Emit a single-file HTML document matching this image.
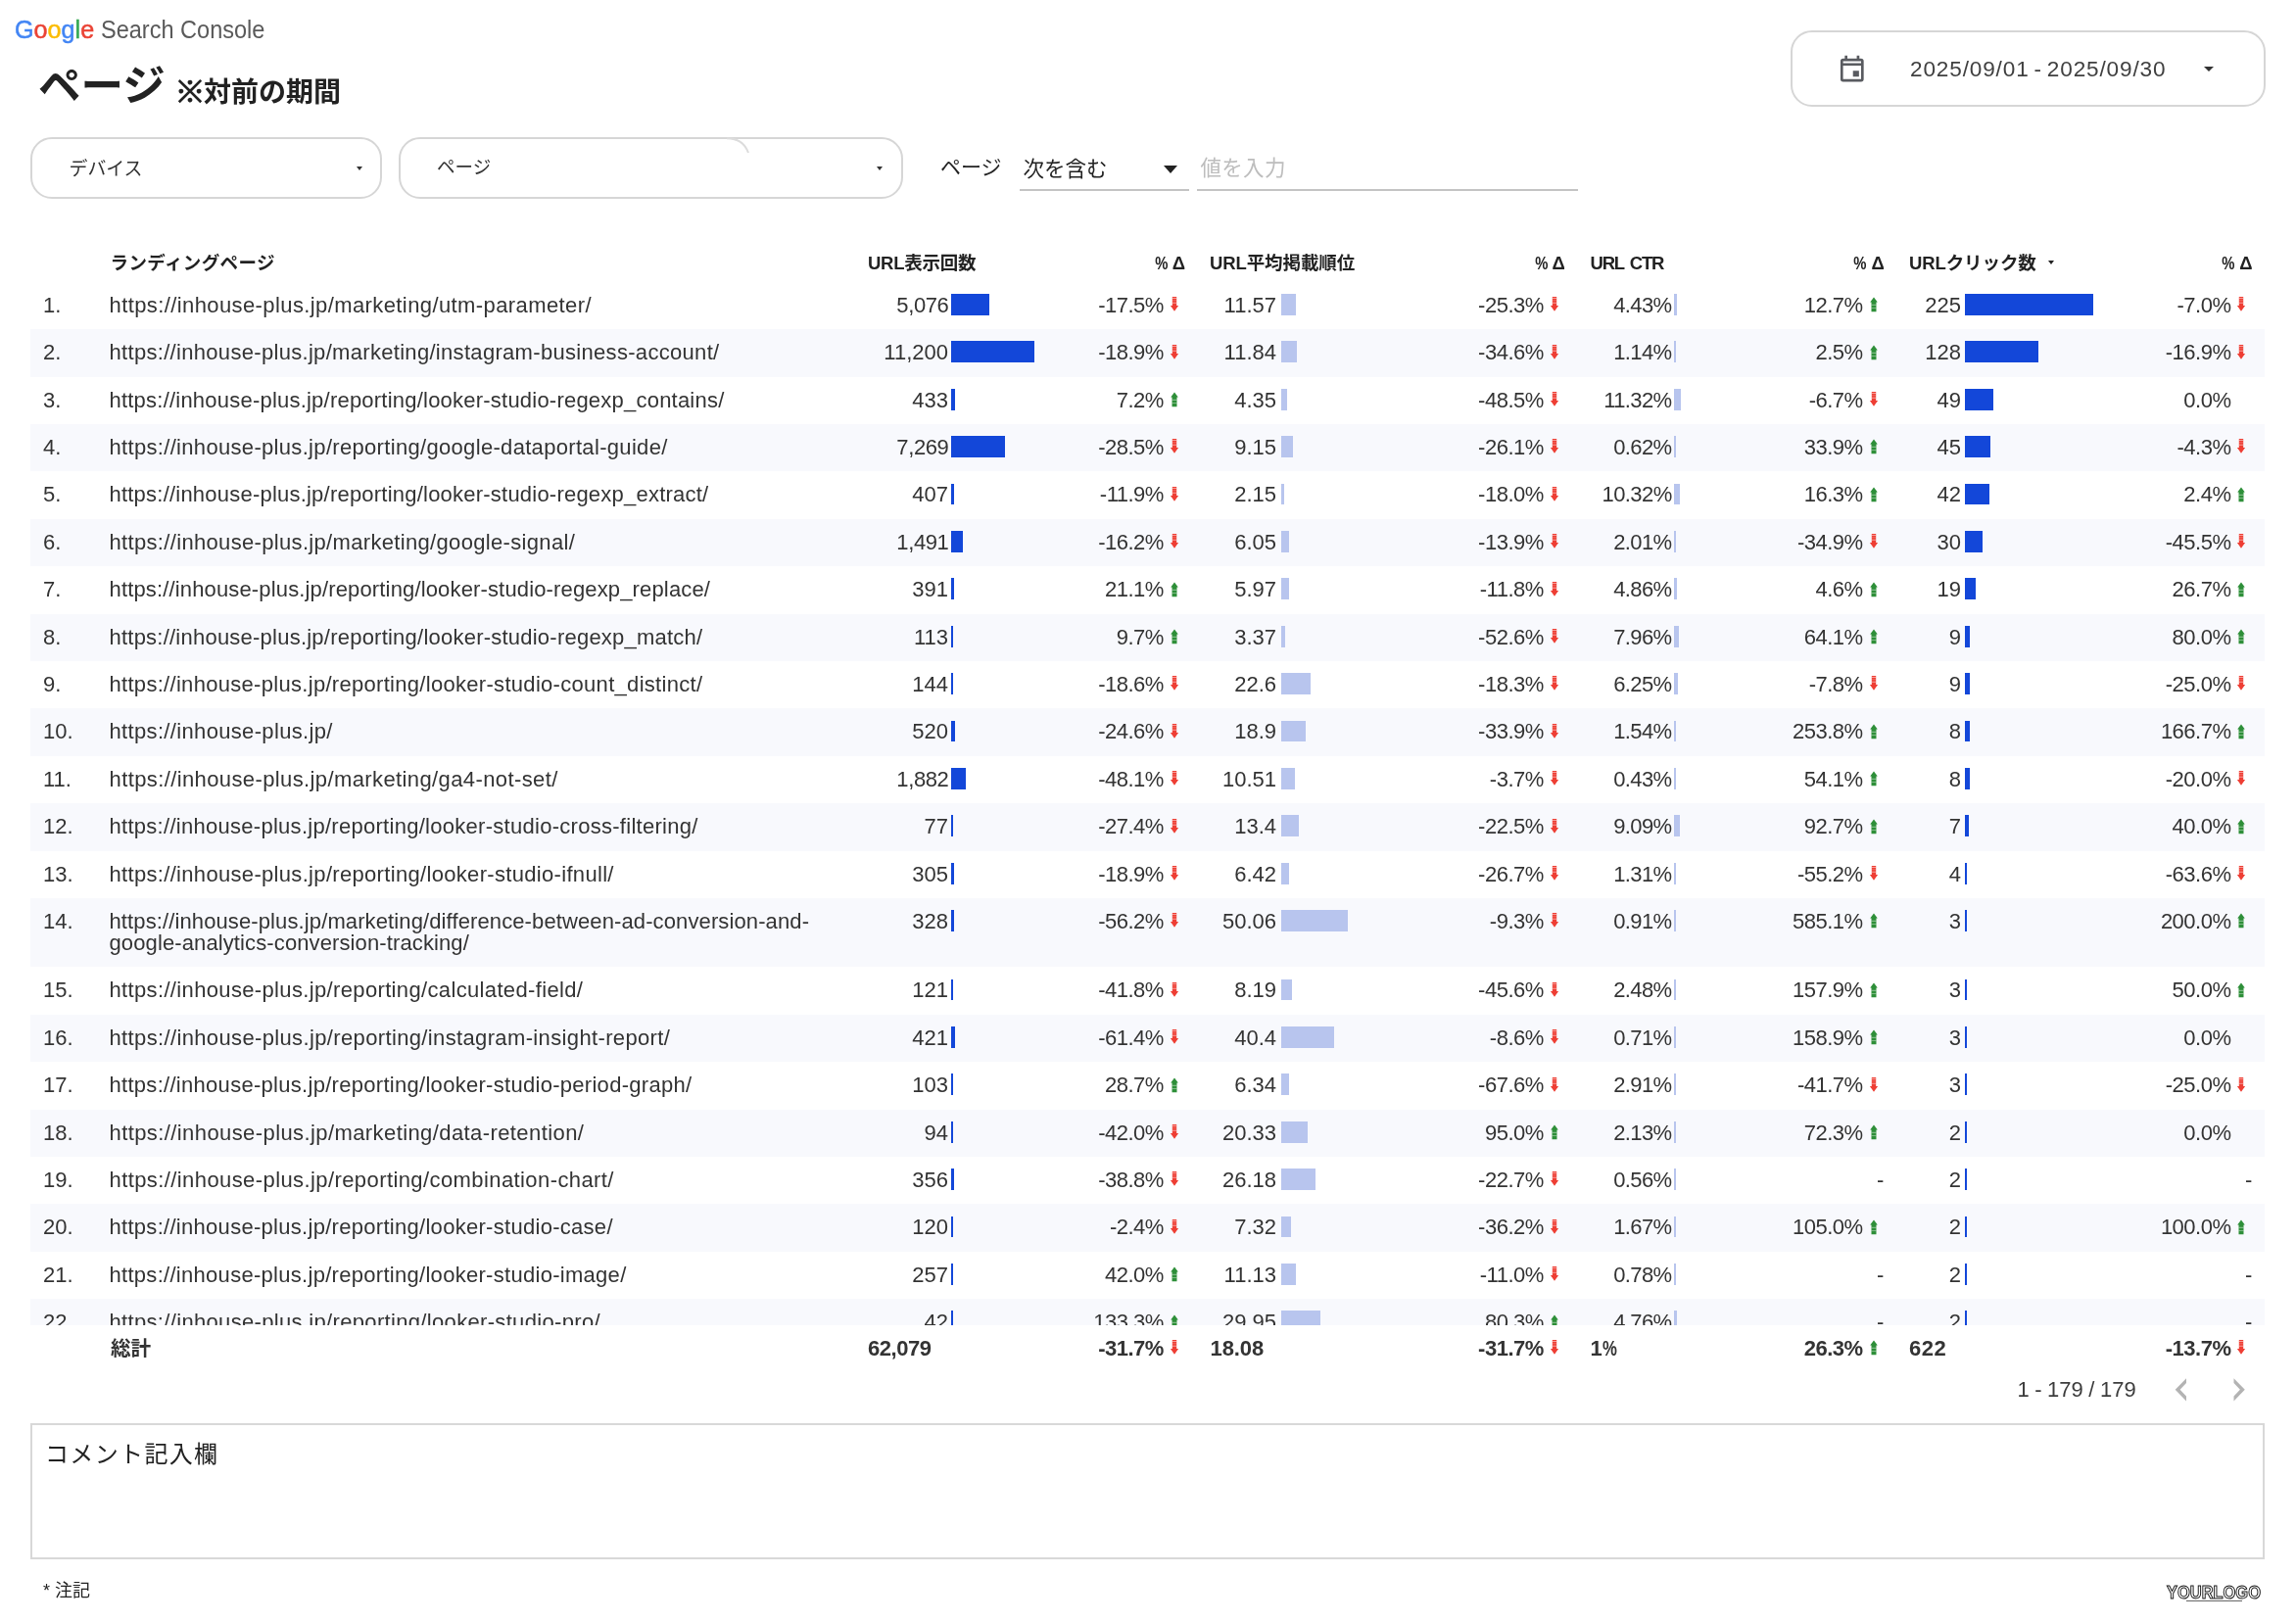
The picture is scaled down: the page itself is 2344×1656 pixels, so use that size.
<!DOCTYPE html>
<html lang="ja"><head><meta charset="utf-8"><title>Google Search Console - ページ</title>
<style>
html,body{margin:0;padding:0;background:#fff}
body{width:2344px;height:1656px;position:relative;font-family:"Liberation Sans","Noto Sans CJK JP",sans-serif;color:#333}
.abs{position:absolute;white-space:nowrap}
.logo{left:15px;top:15.3px;font-size:26px;line-height:30px}
.logo .g{display:inline-block;transform:scaleX(.968);transform-origin:0 50%;-webkit-text-stroke:.5px currentColor}
.logo .sc{display:inline-block;transform:scaleX(.905);transform-origin:0 50%;color:#5a5a5a;margin-left:4.5px}
.title{left:39px;top:57.5px;font-weight:bold;font-size:43.5px;line-height:60px;color:#222}
.sub{left:180px;top:75.2px;font-weight:bold;font-size:28px;line-height:40px;color:#222}
.box{position:absolute;border:2px solid #d6d6d6;border-radius:22px;box-sizing:border-box;background:#fff}
.tri{position:absolute;width:0;height:0;border-style:solid;border-color:#333 transparent transparent transparent}
.ul{position:absolute;height:2px;background:#c4c4c4}
#tbl{position:absolute;left:0;top:287.8px;width:2344px;height:1065.8px;overflow:hidden}
#pg{position:absolute;left:0;top:0;width:2344px;height:1656px;overflow:hidden;will-change:transform}
.row{position:absolute;left:0;width:2344px;height:48.4px;font-size:22px;line-height:48.4px}
.row .bg{position:absolute;left:31.3px;width:2280.5px;top:0;bottom:0;background:#f8f9fd}
.row span{position:absolute;top:0;white-space:nowrap}
.row .n{left:44px}
.row .u{left:111.5px;letter-spacing:.36px}
.row .r{text-align:right}
.row .p{letter-spacing:-.5px;margin-right:-.5px}
.row .c{letter-spacing:-.6px;margin-right:-.6px}
.bar{position:absolute;top:12.2px;height:21.8px}
.ar{position:absolute}
.hd{position:absolute;font-weight:bold;font-size:18.5px;line-height:28px;top:255px;color:#222;white-space:nowrap}
.tot{font-weight:bold;color:#333}
.pc{display:inline-block;transform:scaleX(.8);transform-origin:100% 50%;margin-left:-3px}
.nj{font-family:"Liberation Sans","IPAGothic",sans-serif}
.row.two .u{line-height:22.4px;top:12.8px;white-space:normal}
</style></head><body><div id="pg">
<div class="abs logo"><span class="g"><span style="color:#4285f4">G</span><span style="color:#ea4335">o</span><span style="color:#fbbc05">o</span><span style="color:#4285f4">g</span><span style="color:#34a853">l</span><span style="color:#ea4335">e</span></span><span class="sc">Search Console</span></div>
<div class="abs title">ページ</div><div class="abs sub"><span class="nj">※</span>対前の期間</div>
<div class="box" style="left:1828px;top:31px;width:484.6px;height:78.4px"></div>
<svg class="abs" style="left:1877px;top:56px" width="27.600" height="29" viewBox="0 0 27 29" preserveAspectRatio="none"><path fill="#595b60" d="M6.2 0.8h2.6v3h9.4v-3h2.6v3h1.7a2.6 2.6 0 0 1 2.6 2.6v18.4a2.6 2.6 0 0 1-2.6 2.6H4.5a2.6 2.6 0 0 1-2.6-2.6V6.400a2.6 2.6 0 0 1 2.600-2.600h1.7zM4.500 11v13.8h18V11zM4.500 6.400v2h18v-2zM14.400 16.200h6v6h-6z" fill-rule="evenodd"/></svg>
<div class="abs" style="left:1950px;top:57px;font-size:22.6px;line-height:28px;letter-spacing:.85px;word-spacing:-2.2px;color:#404040">2025/09/01 - 2025/09/30</div>
<div class="tri" style="left:2250px;top:68px;border-width:5px 5px 0 5px"></div>
<div class="box" style="left:31.2px;top:140.2px;width:358.6px;height:63px"></div>
<div class="abs" style="left:70.5px;top:158.5px;font-size:18.9px;line-height:28px;color:#333">デバイス</div>
<div class="tri" style="left:364px;top:170px;border-width:4px 3.700px 0 3.700px"></div>
<div class="box" style="left:406.6px;top:140.2px;width:515px;height:63px"></div>
<svg class="abs" style="left:700px;top:140px" width="70" height="20" viewBox="0 0 70 20"><path d="M42 1.3C54 1.300 60.500 6.500 64 16" fill="none" stroke="#dcdcdc" stroke-width="2"/></svg>
<div class="abs" style="left:446px;top:157px;font-size:18.5px;line-height:28px;color:#333">ページ</div>
<div class="tri" style="left:894.6px;top:170px;border-width:4.2px 3.9px 0 3.9px"></div>
<div class="abs" style="left:960px;top:155px;font-size:21px;line-height:32px;color:#222">ページ</div>
<div class="abs" style="left:1044.5px;top:157px;font-size:21.5px;line-height:32px;color:#222">次を含む</div>
<div class="tri" style="left:1188px;top:169px;border-width:8px 7px 0 7px;border-top-color:#222"></div>
<div class="ul" style="left:1040.500px;top:193px;width:173.500px"></div>
<div class="ul" style="left:1221.500px;top:193px;width:389.500px"></div>
<div class="abs" style="left:1225.500px;top:156px;font-size:21.500px;line-height:32px;color:#bdbdbd;letter-spacing:.3px">値を入力</div>
<div class="hd" style="left:112.5px;letter-spacing:.4px">ランディングページ</div>
<div class="hd" style="left:886px;letter-spacing:-0.25px;word-spacing:0px">URL表示回数</div>
<div class="hd" style="left:1235px;letter-spacing:-0.1px;word-spacing:0px">URL平均掲載順位</div>
<div class="hd" style="left:1623.5px;letter-spacing:-1.2px;word-spacing:2.2px">URL CTR</div>
<div class="hd" style="left:1949px;letter-spacing:-0.1px;word-spacing:0px">URLクリック数</div>
<div class="hd" style="right:1134.0px"><span class="pc">%</span> Δ</div>
<div class="hd" style="right:746.1px"><span class="pc">%</span> Δ</div>
<div class="hd" style="right:420.3px"><span class="pc">%</span> Δ</div>
<div class="hd" style="right:44.4px"><span class="pc">%</span> Δ</div>
<div class="tri" style="left:2090.500px;top:266px;border-width:4.500px 3.700px 0 3.700px;border-top-color:#222"></div>
<div id="tbl">
<div class="row" style="top:0.0px;height:48.4px"><span class="n">1.</span><span class="u" style="letter-spacing:0.4px">https://inhouse-plus.jp/marketing/utm-parameter/</span><span class="r" style="right:1376.0px;letter-spacing:-.4px;margin-right:-.4px">5,076</span><div class="bar" style="left:971.4px;width:38.2px;background:#1347d9"></div><span class="r p" style="right:1156.6px">-17.5%</span><svg class="ar" style="left:1193.8px;top:15.5px" width="10" height="16" viewBox="0 0 10 16"><path fill="#ee3e34" d="M2.8 0h4.400v9h1.900L5 14.800L.900 9h1.900z"/><path fill="#fff" fill-opacity=".5" d="M2.800 .900h4.400v1h-4.400zM2.800 5.700h4.400v1h-4.400z"/><path fill="#fff" fill-opacity=".25" d="M2.800 3.300h4.400v.900h-4.400z"/></svg><span class="r" style="right:1041.0px">11.57</span><div class="bar" style="left:1307.7px;width:15.7px;background:#b8c5ee"></div><span class="r p" style="right:768.7px">-25.3%</span><svg class="ar" style="left:1581.7px;top:15.5px" width="10" height="16" viewBox="0 0 10 16"><path fill="#ee3e34" d="M2.8 0h4.400v9h1.900L5 14.800L.900 9h1.900z"/><path fill="#fff" fill-opacity=".5" d="M2.800 .900h4.400v1h-4.400zM2.800 5.700h4.400v1h-4.400z"/><path fill="#fff" fill-opacity=".25" d="M2.800 3.300h4.400v.900h-4.400z"/></svg><span class="r c" style="right:638.0px">4.43%</span><div class="bar" style="left:1709.1px;width:2.7px;background:#b8c5ee"></div><span class="r p" style="right:442.9px">12.7%</span><svg class="ar" style="left:1907.5px;top:15.5px" width="10" height="16" viewBox="0 0 10 16"><path fill="#2e8f39" d="M5 .600L8.800 5.500H7.500v9.800h-5V5.500H1.200z"/><path fill="#fff" fill-opacity=".38" d="M2.500 7.800h5v1.100h-5zM2.500 11h5v1.100h-5z"/></svg><span class="r" style="right:342.1px">225</span><div class="bar" style="left:2006.2px;width:131.3px;background:#1347d9"></div><span class="r p" style="right:67.0px">-7.0%</span><svg class="ar" style="left:2283.4px;top:15.5px" width="10" height="16" viewBox="0 0 10 16"><path fill="#ee3e34" d="M2.8 0h4.400v9h1.900L5 14.800L.900 9h1.900z"/><path fill="#fff" fill-opacity=".5" d="M2.800 .900h4.400v1h-4.400zM2.800 5.700h4.400v1h-4.400z"/><path fill="#fff" fill-opacity=".25" d="M2.800 3.300h4.400v.900h-4.400z"/></svg></div>
<div class="row" style="top:48.4px;height:48.4px"><div class="bg"></div><span class="n">2.</span><span class="u" style="letter-spacing:0.31px">https://inhouse-plus.jp/marketing/instagram-business-account/</span><span class="r" style="right:1376.0px">11,200</span><div class="bar" style="left:971.4px;width:84.3px;background:#1347d9"></div><span class="r p" style="right:1156.6px">-18.9%</span><svg class="ar" style="left:1193.8px;top:15.5px" width="10" height="16" viewBox="0 0 10 16"><path fill="#ee3e34" d="M2.8 0h4.400v9h1.900L5 14.800L.900 9h1.900z"/><path fill="#fff" fill-opacity=".5" d="M2.800 .900h4.400v1h-4.400zM2.800 5.700h4.400v1h-4.400z"/><path fill="#fff" fill-opacity=".25" d="M2.800 3.300h4.400v.900h-4.400z"/></svg><span class="r" style="right:1041.0px">11.84</span><div class="bar" style="left:1307.7px;width:16.1px;background:#b8c5ee"></div><span class="r p" style="right:768.7px">-34.6%</span><svg class="ar" style="left:1581.7px;top:15.5px" width="10" height="16" viewBox="0 0 10 16"><path fill="#ee3e34" d="M2.8 0h4.400v9h1.900L5 14.800L.900 9h1.900z"/><path fill="#fff" fill-opacity=".5" d="M2.800 .900h4.400v1h-4.400zM2.800 5.700h4.400v1h-4.400z"/><path fill="#fff" fill-opacity=".25" d="M2.800 3.300h4.400v.900h-4.400z"/></svg><span class="r c" style="right:638.0px">1.14%</span><div class="bar" style="left:1709.1px;width:1.5px;background:#b8c5ee"></div><span class="r p" style="right:442.9px">2.5%</span><svg class="ar" style="left:1907.5px;top:15.5px" width="10" height="16" viewBox="0 0 10 16"><path fill="#2e8f39" d="M5 .600L8.800 5.500H7.500v9.800h-5V5.500H1.200z"/><path fill="#fff" fill-opacity=".38" d="M2.500 7.800h5v1.100h-5zM2.500 11h5v1.100h-5z"/></svg><span class="r" style="right:342.1px">128</span><div class="bar" style="left:2006.2px;width:74.7px;background:#1347d9"></div><span class="r p" style="right:67.0px">-16.9%</span><svg class="ar" style="left:2283.4px;top:15.5px" width="10" height="16" viewBox="0 0 10 16"><path fill="#ee3e34" d="M2.8 0h4.400v9h1.900L5 14.800L.900 9h1.900z"/><path fill="#fff" fill-opacity=".5" d="M2.800 .900h4.400v1h-4.400zM2.800 5.700h4.400v1h-4.400z"/><path fill="#fff" fill-opacity=".25" d="M2.800 3.300h4.400v.900h-4.400z"/></svg></div>
<div class="row" style="top:96.8px;height:48.4px"><span class="n">3.</span><span class="u" style="letter-spacing:0.22px">https://inhouse-plus.jp/reporting/looker-studio-regexp_contains/</span><span class="r" style="right:1376.0px">433</span><div class="bar" style="left:971.4px;width:3.3px;background:#1347d9"></div><span class="r p" style="right:1156.6px">7.2%</span><svg class="ar" style="left:1193.8px;top:15.5px" width="10" height="16" viewBox="0 0 10 16"><path fill="#2e8f39" d="M5 .600L8.800 5.500H7.500v9.800h-5V5.500H1.200z"/><path fill="#fff" fill-opacity=".38" d="M2.500 7.800h5v1.100h-5zM2.500 11h5v1.100h-5z"/></svg><span class="r" style="right:1041.0px">4.35</span><div class="bar" style="left:1307.7px;width:5.9px;background:#b8c5ee"></div><span class="r p" style="right:768.7px">-48.5%</span><svg class="ar" style="left:1581.7px;top:15.5px" width="10" height="16" viewBox="0 0 10 16"><path fill="#ee3e34" d="M2.8 0h4.400v9h1.900L5 14.800L.900 9h1.900z"/><path fill="#fff" fill-opacity=".5" d="M2.800 .900h4.400v1h-4.400zM2.800 5.700h4.400v1h-4.400z"/><path fill="#fff" fill-opacity=".25" d="M2.800 3.300h4.400v.900h-4.400z"/></svg><span class="r c" style="right:638.0px">11.32%</span><div class="bar" style="left:1709.1px;width:6.8px;background:#b8c5ee"></div><span class="r p" style="right:442.9px">-6.7%</span><svg class="ar" style="left:1907.5px;top:15.5px" width="10" height="16" viewBox="0 0 10 16"><path fill="#ee3e34" d="M2.8 0h4.400v9h1.900L5 14.800L.900 9h1.900z"/><path fill="#fff" fill-opacity=".5" d="M2.800 .900h4.400v1h-4.400zM2.800 5.700h4.400v1h-4.400z"/><path fill="#fff" fill-opacity=".25" d="M2.800 3.300h4.400v.900h-4.400z"/></svg><span class="r" style="right:342.1px">49</span><div class="bar" style="left:2006.2px;width:28.6px;background:#1347d9"></div><span class="r p" style="right:67.0px">0.0%</span></div>
<div class="row" style="top:145.2px;height:48.4px"><div class="bg"></div><span class="n">4.</span><span class="u" style="letter-spacing:0.32px">https://inhouse-plus.jp/reporting/google-dataportal-guide/</span><span class="r" style="right:1376.0px;letter-spacing:-.4px;margin-right:-.4px">7,269</span><div class="bar" style="left:971.4px;width:54.7px;background:#1347d9"></div><span class="r p" style="right:1156.6px">-28.5%</span><svg class="ar" style="left:1193.8px;top:15.5px" width="10" height="16" viewBox="0 0 10 16"><path fill="#ee3e34" d="M2.8 0h4.400v9h1.900L5 14.800L.900 9h1.900z"/><path fill="#fff" fill-opacity=".5" d="M2.800 .900h4.400v1h-4.400zM2.800 5.700h4.400v1h-4.400z"/><path fill="#fff" fill-opacity=".25" d="M2.800 3.300h4.400v.900h-4.400z"/></svg><span class="r" style="right:1041.0px">9.15</span><div class="bar" style="left:1307.7px;width:12.4px;background:#b8c5ee"></div><span class="r p" style="right:768.7px">-26.1%</span><svg class="ar" style="left:1581.7px;top:15.5px" width="10" height="16" viewBox="0 0 10 16"><path fill="#ee3e34" d="M2.8 0h4.400v9h1.900L5 14.800L.900 9h1.900z"/><path fill="#fff" fill-opacity=".5" d="M2.800 .900h4.400v1h-4.400zM2.800 5.700h4.400v1h-4.400z"/><path fill="#fff" fill-opacity=".25" d="M2.800 3.300h4.400v.900h-4.400z"/></svg><span class="r c" style="right:638.0px">0.62%</span><div class="bar" style="left:1709.1px;width:1.5px;background:#b8c5ee"></div><span class="r p" style="right:442.9px">33.9%</span><svg class="ar" style="left:1907.5px;top:15.5px" width="10" height="16" viewBox="0 0 10 16"><path fill="#2e8f39" d="M5 .600L8.800 5.500H7.500v9.800h-5V5.500H1.200z"/><path fill="#fff" fill-opacity=".38" d="M2.500 7.800h5v1.100h-5zM2.500 11h5v1.100h-5z"/></svg><span class="r" style="right:342.1px">45</span><div class="bar" style="left:2006.2px;width:26.3px;background:#1347d9"></div><span class="r p" style="right:67.0px">-4.3%</span><svg class="ar" style="left:2283.4px;top:15.5px" width="10" height="16" viewBox="0 0 10 16"><path fill="#ee3e34" d="M2.8 0h4.400v9h1.900L5 14.800L.900 9h1.900z"/><path fill="#fff" fill-opacity=".5" d="M2.800 .900h4.400v1h-4.400zM2.800 5.700h4.400v1h-4.400z"/><path fill="#fff" fill-opacity=".25" d="M2.800 3.300h4.400v.900h-4.400z"/></svg></div>
<div class="row" style="top:193.6px;height:48.4px"><span class="n">5.</span><span class="u" style="letter-spacing:0.22px">https://inhouse-plus.jp/reporting/looker-studio-regexp_extract/</span><span class="r" style="right:1376.0px">407</span><div class="bar" style="left:971.4px;width:3.1px;background:#1347d9"></div><span class="r p" style="right:1156.6px">-11.9%</span><svg class="ar" style="left:1193.8px;top:15.5px" width="10" height="16" viewBox="0 0 10 16"><path fill="#ee3e34" d="M2.8 0h4.400v9h1.900L5 14.800L.900 9h1.900z"/><path fill="#fff" fill-opacity=".5" d="M2.800 .900h4.400v1h-4.400zM2.800 5.700h4.400v1h-4.400z"/><path fill="#fff" fill-opacity=".25" d="M2.800 3.300h4.400v.900h-4.400z"/></svg><span class="r" style="right:1041.0px">2.15</span><div class="bar" style="left:1307.7px;width:2.9px;background:#b8c5ee"></div><span class="r p" style="right:768.7px">-18.0%</span><svg class="ar" style="left:1581.7px;top:15.5px" width="10" height="16" viewBox="0 0 10 16"><path fill="#ee3e34" d="M2.8 0h4.400v9h1.900L5 14.800L.900 9h1.900z"/><path fill="#fff" fill-opacity=".5" d="M2.800 .900h4.400v1h-4.400zM2.800 5.700h4.400v1h-4.400z"/><path fill="#fff" fill-opacity=".25" d="M2.800 3.300h4.400v.900h-4.400z"/></svg><span class="r c" style="right:638.0px">10.32%</span><div class="bar" style="left:1709.1px;width:6.2px;background:#b8c5ee"></div><span class="r p" style="right:442.9px">16.3%</span><svg class="ar" style="left:1907.5px;top:15.5px" width="10" height="16" viewBox="0 0 10 16"><path fill="#2e8f39" d="M5 .600L8.800 5.500H7.500v9.800h-5V5.500H1.200z"/><path fill="#fff" fill-opacity=".38" d="M2.500 7.800h5v1.100h-5zM2.500 11h5v1.100h-5z"/></svg><span class="r" style="right:342.1px">42</span><div class="bar" style="left:2006.2px;width:24.5px;background:#1347d9"></div><span class="r p" style="right:67.0px">2.4%</span><svg class="ar" style="left:2283.4px;top:15.5px" width="10" height="16" viewBox="0 0 10 16"><path fill="#2e8f39" d="M5 .600L8.800 5.500H7.500v9.800h-5V5.500H1.200z"/><path fill="#fff" fill-opacity=".38" d="M2.500 7.800h5v1.100h-5zM2.500 11h5v1.100h-5z"/></svg></div>
<div class="row" style="top:242.0px;height:48.4px"><div class="bg"></div><span class="n">6.</span><span class="u" style="letter-spacing:0.33px">https://inhouse-plus.jp/marketing/google-signal/</span><span class="r" style="right:1376.0px;letter-spacing:-.4px;margin-right:-.4px">1,491</span><div class="bar" style="left:971.4px;width:11.2px;background:#1347d9"></div><span class="r p" style="right:1156.6px">-16.2%</span><svg class="ar" style="left:1193.8px;top:15.5px" width="10" height="16" viewBox="0 0 10 16"><path fill="#ee3e34" d="M2.8 0h4.400v9h1.900L5 14.800L.900 9h1.900z"/><path fill="#fff" fill-opacity=".5" d="M2.800 .900h4.400v1h-4.400zM2.800 5.700h4.400v1h-4.400z"/><path fill="#fff" fill-opacity=".25" d="M2.800 3.300h4.400v.900h-4.400z"/></svg><span class="r" style="right:1041.0px">6.05</span><div class="bar" style="left:1307.7px;width:8.2px;background:#b8c5ee"></div><span class="r p" style="right:768.7px">-13.9%</span><svg class="ar" style="left:1581.7px;top:15.5px" width="10" height="16" viewBox="0 0 10 16"><path fill="#ee3e34" d="M2.8 0h4.400v9h1.900L5 14.800L.900 9h1.900z"/><path fill="#fff" fill-opacity=".5" d="M2.800 .900h4.400v1h-4.400zM2.800 5.700h4.400v1h-4.400z"/><path fill="#fff" fill-opacity=".25" d="M2.800 3.300h4.400v.900h-4.400z"/></svg><span class="r c" style="right:638.0px">2.01%</span><div class="bar" style="left:1709.1px;width:1.5px;background:#b8c5ee"></div><span class="r p" style="right:442.9px">-34.9%</span><svg class="ar" style="left:1907.5px;top:15.5px" width="10" height="16" viewBox="0 0 10 16"><path fill="#ee3e34" d="M2.8 0h4.400v9h1.900L5 14.800L.900 9h1.900z"/><path fill="#fff" fill-opacity=".5" d="M2.800 .900h4.400v1h-4.400zM2.800 5.700h4.400v1h-4.400z"/><path fill="#fff" fill-opacity=".25" d="M2.800 3.300h4.400v.900h-4.400z"/></svg><span class="r" style="right:342.1px">30</span><div class="bar" style="left:2006.2px;width:17.5px;background:#1347d9"></div><span class="r p" style="right:67.0px">-45.5%</span><svg class="ar" style="left:2283.4px;top:15.5px" width="10" height="16" viewBox="0 0 10 16"><path fill="#ee3e34" d="M2.8 0h4.400v9h1.900L5 14.800L.900 9h1.900z"/><path fill="#fff" fill-opacity=".5" d="M2.800 .900h4.400v1h-4.400zM2.800 5.700h4.400v1h-4.400z"/><path fill="#fff" fill-opacity=".25" d="M2.800 3.300h4.400v.900h-4.400z"/></svg></div>
<div class="row" style="top:290.4px;height:48.4px"><span class="n">7.</span><span class="u" style="letter-spacing:0.15px">https://inhouse-plus.jp/reporting/looker-studio-regexp_replace/</span><span class="r" style="right:1376.0px">391</span><div class="bar" style="left:971.4px;width:2.9px;background:#1347d9"></div><span class="r p" style="right:1156.6px">21.1%</span><svg class="ar" style="left:1193.8px;top:15.5px" width="10" height="16" viewBox="0 0 10 16"><path fill="#2e8f39" d="M5 .600L8.800 5.500H7.500v9.800h-5V5.500H1.200z"/><path fill="#fff" fill-opacity=".38" d="M2.500 7.800h5v1.100h-5zM2.500 11h5v1.100h-5z"/></svg><span class="r" style="right:1041.0px">5.97</span><div class="bar" style="left:1307.7px;width:8.1px;background:#b8c5ee"></div><span class="r p" style="right:768.7px">-11.8%</span><svg class="ar" style="left:1581.7px;top:15.5px" width="10" height="16" viewBox="0 0 10 16"><path fill="#ee3e34" d="M2.8 0h4.400v9h1.900L5 14.800L.900 9h1.900z"/><path fill="#fff" fill-opacity=".5" d="M2.800 .900h4.400v1h-4.400zM2.800 5.700h4.400v1h-4.400z"/><path fill="#fff" fill-opacity=".25" d="M2.800 3.300h4.400v.900h-4.400z"/></svg><span class="r c" style="right:638.0px">4.86%</span><div class="bar" style="left:1709.1px;width:2.9px;background:#b8c5ee"></div><span class="r p" style="right:442.9px">4.6%</span><svg class="ar" style="left:1907.5px;top:15.5px" width="10" height="16" viewBox="0 0 10 16"><path fill="#2e8f39" d="M5 .600L8.800 5.500H7.500v9.800h-5V5.500H1.200z"/><path fill="#fff" fill-opacity=".38" d="M2.500 7.800h5v1.100h-5zM2.500 11h5v1.100h-5z"/></svg><span class="r" style="right:342.1px">19</span><div class="bar" style="left:2006.2px;width:11.1px;background:#1347d9"></div><span class="r p" style="right:67.0px">26.7%</span><svg class="ar" style="left:2283.4px;top:15.5px" width="10" height="16" viewBox="0 0 10 16"><path fill="#2e8f39" d="M5 .600L8.800 5.500H7.500v9.800h-5V5.500H1.200z"/><path fill="#fff" fill-opacity=".38" d="M2.500 7.800h5v1.100h-5zM2.500 11h5v1.100h-5z"/></svg></div>
<div class="row" style="top:338.8px;height:48.4px"><div class="bg"></div><span class="n">8.</span><span class="u" style="letter-spacing:0.23px">https://inhouse-plus.jp/reporting/looker-studio-regexp_match/</span><span class="r" style="right:1376.0px">113</span><div class="bar" style="left:971.4px;width:1.4px;background:#1347d9"></div><span class="r p" style="right:1156.6px">9.7%</span><svg class="ar" style="left:1193.8px;top:15.5px" width="10" height="16" viewBox="0 0 10 16"><path fill="#2e8f39" d="M5 .600L8.800 5.500H7.500v9.800h-5V5.500H1.200z"/><path fill="#fff" fill-opacity=".38" d="M2.500 7.800h5v1.100h-5zM2.500 11h5v1.100h-5z"/></svg><span class="r" style="right:1041.0px">3.37</span><div class="bar" style="left:1307.7px;width:4.6px;background:#b8c5ee"></div><span class="r p" style="right:768.7px">-52.6%</span><svg class="ar" style="left:1581.7px;top:15.5px" width="10" height="16" viewBox="0 0 10 16"><path fill="#ee3e34" d="M2.8 0h4.400v9h1.900L5 14.800L.900 9h1.900z"/><path fill="#fff" fill-opacity=".5" d="M2.800 .900h4.400v1h-4.400zM2.800 5.700h4.400v1h-4.400z"/><path fill="#fff" fill-opacity=".25" d="M2.800 3.300h4.400v.900h-4.400z"/></svg><span class="r c" style="right:638.0px">7.96%</span><div class="bar" style="left:1709.1px;width:4.8px;background:#b8c5ee"></div><span class="r p" style="right:442.9px">64.1%</span><svg class="ar" style="left:1907.5px;top:15.5px" width="10" height="16" viewBox="0 0 10 16"><path fill="#2e8f39" d="M5 .600L8.800 5.500H7.500v9.800h-5V5.500H1.200z"/><path fill="#fff" fill-opacity=".38" d="M2.500 7.800h5v1.100h-5zM2.500 11h5v1.100h-5z"/></svg><span class="r" style="right:342.1px">9</span><div class="bar" style="left:2006.2px;width:5.3px;background:#1347d9"></div><span class="r p" style="right:67.0px">80.0%</span><svg class="ar" style="left:2283.4px;top:15.5px" width="10" height="16" viewBox="0 0 10 16"><path fill="#2e8f39" d="M5 .600L8.800 5.500H7.500v9.800h-5V5.500H1.200z"/><path fill="#fff" fill-opacity=".38" d="M2.500 7.800h5v1.100h-5zM2.500 11h5v1.100h-5z"/></svg></div>
<div class="row" style="top:387.2px;height:48.4px"><span class="n">9.</span><span class="u" style="letter-spacing:0.3px">https://inhouse-plus.jp/reporting/looker-studio-count_distinct/</span><span class="r" style="right:1376.0px">144</span><div class="bar" style="left:971.4px;width:1.4px;background:#1347d9"></div><span class="r p" style="right:1156.6px">-18.6%</span><svg class="ar" style="left:1193.8px;top:15.5px" width="10" height="16" viewBox="0 0 10 16"><path fill="#ee3e34" d="M2.8 0h4.400v9h1.900L5 14.800L.900 9h1.900z"/><path fill="#fff" fill-opacity=".5" d="M2.800 .900h4.400v1h-4.400zM2.800 5.700h4.400v1h-4.400z"/><path fill="#fff" fill-opacity=".25" d="M2.800 3.300h4.400v.900h-4.400z"/></svg><span class="r" style="right:1041.0px">22.6</span><div class="bar" style="left:1307.7px;width:30.7px;background:#b8c5ee"></div><span class="r p" style="right:768.7px">-18.3%</span><svg class="ar" style="left:1581.7px;top:15.5px" width="10" height="16" viewBox="0 0 10 16"><path fill="#ee3e34" d="M2.8 0h4.400v9h1.900L5 14.800L.900 9h1.900z"/><path fill="#fff" fill-opacity=".5" d="M2.800 .900h4.400v1h-4.400zM2.800 5.700h4.400v1h-4.400z"/><path fill="#fff" fill-opacity=".25" d="M2.800 3.300h4.400v.900h-4.400z"/></svg><span class="r c" style="right:638.0px">6.25%</span><div class="bar" style="left:1709.1px;width:3.8px;background:#b8c5ee"></div><span class="r p" style="right:442.9px">-7.8%</span><svg class="ar" style="left:1907.5px;top:15.5px" width="10" height="16" viewBox="0 0 10 16"><path fill="#ee3e34" d="M2.8 0h4.400v9h1.900L5 14.800L.900 9h1.900z"/><path fill="#fff" fill-opacity=".5" d="M2.800 .900h4.400v1h-4.400zM2.800 5.700h4.400v1h-4.400z"/><path fill="#fff" fill-opacity=".25" d="M2.800 3.300h4.400v.900h-4.400z"/></svg><span class="r" style="right:342.1px">9</span><div class="bar" style="left:2006.2px;width:5.3px;background:#1347d9"></div><span class="r p" style="right:67.0px">-25.0%</span><svg class="ar" style="left:2283.4px;top:15.5px" width="10" height="16" viewBox="0 0 10 16"><path fill="#ee3e34" d="M2.8 0h4.400v9h1.900L5 14.800L.900 9h1.900z"/><path fill="#fff" fill-opacity=".5" d="M2.800 .900h4.400v1h-4.400zM2.800 5.700h4.400v1h-4.400z"/><path fill="#fff" fill-opacity=".25" d="M2.800 3.300h4.400v.900h-4.400z"/></svg></div>
<div class="row" style="top:435.6px;height:48.4px"><div class="bg"></div><span class="n">10.</span><span class="u" style="letter-spacing:0.34px">https://inhouse-plus.jp/</span><span class="r" style="right:1376.0px">520</span><div class="bar" style="left:971.4px;width:3.9px;background:#1347d9"></div><span class="r p" style="right:1156.6px">-24.6%</span><svg class="ar" style="left:1193.8px;top:15.5px" width="10" height="16" viewBox="0 0 10 16"><path fill="#ee3e34" d="M2.8 0h4.400v9h1.900L5 14.800L.900 9h1.900z"/><path fill="#fff" fill-opacity=".5" d="M2.800 .900h4.400v1h-4.400zM2.800 5.700h4.400v1h-4.400z"/><path fill="#fff" fill-opacity=".25" d="M2.800 3.300h4.400v.900h-4.400z"/></svg><span class="r" style="right:1041.0px">18.9</span><div class="bar" style="left:1307.7px;width:25.6px;background:#b8c5ee"></div><span class="r p" style="right:768.7px">-33.9%</span><svg class="ar" style="left:1581.7px;top:15.5px" width="10" height="16" viewBox="0 0 10 16"><path fill="#ee3e34" d="M2.8 0h4.400v9h1.900L5 14.800L.900 9h1.900z"/><path fill="#fff" fill-opacity=".5" d="M2.800 .900h4.400v1h-4.400zM2.800 5.700h4.400v1h-4.400z"/><path fill="#fff" fill-opacity=".25" d="M2.800 3.300h4.400v.900h-4.400z"/></svg><span class="r c" style="right:638.0px">1.54%</span><div class="bar" style="left:1709.1px;width:1.5px;background:#b8c5ee"></div><span class="r p" style="right:442.9px">253.8%</span><svg class="ar" style="left:1907.5px;top:15.5px" width="10" height="16" viewBox="0 0 10 16"><path fill="#2e8f39" d="M5 .600L8.800 5.500H7.500v9.800h-5V5.500H1.200z"/><path fill="#fff" fill-opacity=".38" d="M2.500 7.800h5v1.100h-5zM2.500 11h5v1.100h-5z"/></svg><span class="r" style="right:342.1px">8</span><div class="bar" style="left:2006.2px;width:4.7px;background:#1347d9"></div><span class="r p" style="right:67.0px">166.7%</span><svg class="ar" style="left:2283.4px;top:15.5px" width="10" height="16" viewBox="0 0 10 16"><path fill="#2e8f39" d="M5 .600L8.800 5.500H7.500v9.800h-5V5.500H1.200z"/><path fill="#fff" fill-opacity=".38" d="M2.500 7.800h5v1.100h-5zM2.500 11h5v1.100h-5z"/></svg></div>
<div class="row" style="top:484.0px;height:48.4px"><span class="n">11.</span><span class="u" style="letter-spacing:0.39px">https://inhouse-plus.jp/marketing/ga4-not-set/</span><span class="r" style="right:1376.0px;letter-spacing:-.4px;margin-right:-.4px">1,882</span><div class="bar" style="left:971.4px;width:14.2px;background:#1347d9"></div><span class="r p" style="right:1156.6px">-48.1%</span><svg class="ar" style="left:1193.8px;top:15.5px" width="10" height="16" viewBox="0 0 10 16"><path fill="#ee3e34" d="M2.8 0h4.400v9h1.900L5 14.800L.900 9h1.900z"/><path fill="#fff" fill-opacity=".5" d="M2.800 .900h4.400v1h-4.400zM2.800 5.700h4.400v1h-4.400z"/><path fill="#fff" fill-opacity=".25" d="M2.800 3.300h4.400v.900h-4.400z"/></svg><span class="r" style="right:1041.0px">10.51</span><div class="bar" style="left:1307.7px;width:14.3px;background:#b8c5ee"></div><span class="r p" style="right:768.7px">-3.7%</span><svg class="ar" style="left:1581.7px;top:15.5px" width="10" height="16" viewBox="0 0 10 16"><path fill="#ee3e34" d="M2.8 0h4.400v9h1.900L5 14.800L.900 9h1.900z"/><path fill="#fff" fill-opacity=".5" d="M2.800 .900h4.400v1h-4.400zM2.800 5.700h4.400v1h-4.400z"/><path fill="#fff" fill-opacity=".25" d="M2.800 3.300h4.400v.900h-4.400z"/></svg><span class="r c" style="right:638.0px">0.43%</span><div class="bar" style="left:1709.1px;width:1.5px;background:#b8c5ee"></div><span class="r p" style="right:442.9px">54.1%</span><svg class="ar" style="left:1907.5px;top:15.5px" width="10" height="16" viewBox="0 0 10 16"><path fill="#2e8f39" d="M5 .600L8.800 5.500H7.500v9.800h-5V5.500H1.200z"/><path fill="#fff" fill-opacity=".38" d="M2.500 7.800h5v1.100h-5zM2.500 11h5v1.100h-5z"/></svg><span class="r" style="right:342.1px">8</span><div class="bar" style="left:2006.2px;width:4.7px;background:#1347d9"></div><span class="r p" style="right:67.0px">-20.0%</span><svg class="ar" style="left:2283.4px;top:15.5px" width="10" height="16" viewBox="0 0 10 16"><path fill="#ee3e34" d="M2.8 0h4.400v9h1.900L5 14.800L.900 9h1.900z"/><path fill="#fff" fill-opacity=".5" d="M2.800 .900h4.400v1h-4.400zM2.800 5.700h4.400v1h-4.400z"/><path fill="#fff" fill-opacity=".25" d="M2.800 3.300h4.400v.900h-4.400z"/></svg></div>
<div class="row" style="top:532.4px;height:48.4px"><div class="bg"></div><span class="n">12.</span><span class="u" style="letter-spacing:0.28px">https://inhouse-plus.jp/reporting/looker-studio-cross-filtering/</span><span class="r" style="right:1376.0px">77</span><div class="bar" style="left:971.4px;width:1.4px;background:#1347d9"></div><span class="r p" style="right:1156.6px">-27.4%</span><svg class="ar" style="left:1193.8px;top:15.5px" width="10" height="16" viewBox="0 0 10 16"><path fill="#ee3e34" d="M2.8 0h4.400v9h1.900L5 14.800L.900 9h1.900z"/><path fill="#fff" fill-opacity=".5" d="M2.800 .900h4.400v1h-4.400zM2.800 5.700h4.400v1h-4.400z"/><path fill="#fff" fill-opacity=".25" d="M2.800 3.300h4.400v.900h-4.400z"/></svg><span class="r" style="right:1041.0px">13.4</span><div class="bar" style="left:1307.7px;width:18.2px;background:#b8c5ee"></div><span class="r p" style="right:768.7px">-22.5%</span><svg class="ar" style="left:1581.7px;top:15.5px" width="10" height="16" viewBox="0 0 10 16"><path fill="#ee3e34" d="M2.8 0h4.400v9h1.900L5 14.800L.900 9h1.900z"/><path fill="#fff" fill-opacity=".5" d="M2.800 .900h4.400v1h-4.400zM2.800 5.700h4.400v1h-4.400z"/><path fill="#fff" fill-opacity=".25" d="M2.800 3.300h4.400v.900h-4.400z"/></svg><span class="r c" style="right:638.0px">9.09%</span><div class="bar" style="left:1709.1px;width:5.5px;background:#b8c5ee"></div><span class="r p" style="right:442.9px">92.7%</span><svg class="ar" style="left:1907.5px;top:15.5px" width="10" height="16" viewBox="0 0 10 16"><path fill="#2e8f39" d="M5 .600L8.800 5.500H7.500v9.800h-5V5.500H1.200z"/><path fill="#fff" fill-opacity=".38" d="M2.500 7.800h5v1.100h-5zM2.500 11h5v1.100h-5z"/></svg><span class="r" style="right:342.1px">7</span><div class="bar" style="left:2006.2px;width:4.1px;background:#1347d9"></div><span class="r p" style="right:67.0px">40.0%</span><svg class="ar" style="left:2283.4px;top:15.5px" width="10" height="16" viewBox="0 0 10 16"><path fill="#2e8f39" d="M5 .600L8.800 5.500H7.500v9.800h-5V5.500H1.200z"/><path fill="#fff" fill-opacity=".38" d="M2.500 7.800h5v1.100h-5zM2.500 11h5v1.100h-5z"/></svg></div>
<div class="row" style="top:580.8px;height:48.4px"><span class="n">13.</span><span class="u" style="letter-spacing:0.32px">https://inhouse-plus.jp/reporting/looker-studio-ifnull/</span><span class="r" style="right:1376.0px">305</span><div class="bar" style="left:971.4px;width:2.3px;background:#1347d9"></div><span class="r p" style="right:1156.6px">-18.9%</span><svg class="ar" style="left:1193.8px;top:15.5px" width="10" height="16" viewBox="0 0 10 16"><path fill="#ee3e34" d="M2.8 0h4.400v9h1.900L5 14.800L.900 9h1.900z"/><path fill="#fff" fill-opacity=".5" d="M2.800 .900h4.400v1h-4.400zM2.800 5.700h4.400v1h-4.400z"/><path fill="#fff" fill-opacity=".25" d="M2.800 3.300h4.400v.900h-4.400z"/></svg><span class="r" style="right:1041.0px">6.42</span><div class="bar" style="left:1307.7px;width:8.7px;background:#b8c5ee"></div><span class="r p" style="right:768.7px">-26.7%</span><svg class="ar" style="left:1581.7px;top:15.5px" width="10" height="16" viewBox="0 0 10 16"><path fill="#ee3e34" d="M2.8 0h4.400v9h1.900L5 14.800L.900 9h1.900z"/><path fill="#fff" fill-opacity=".5" d="M2.800 .900h4.400v1h-4.400zM2.800 5.700h4.400v1h-4.400z"/><path fill="#fff" fill-opacity=".25" d="M2.800 3.300h4.400v.900h-4.400z"/></svg><span class="r c" style="right:638.0px">1.31%</span><div class="bar" style="left:1709.1px;width:1.5px;background:#b8c5ee"></div><span class="r p" style="right:442.9px">-55.2%</span><svg class="ar" style="left:1907.5px;top:15.5px" width="10" height="16" viewBox="0 0 10 16"><path fill="#ee3e34" d="M2.8 0h4.400v9h1.900L5 14.800L.900 9h1.900z"/><path fill="#fff" fill-opacity=".5" d="M2.800 .900h4.400v1h-4.400zM2.800 5.700h4.400v1h-4.400z"/><path fill="#fff" fill-opacity=".25" d="M2.800 3.300h4.400v.900h-4.400z"/></svg><span class="r" style="right:342.1px">4</span><div class="bar" style="left:2006.2px;width:2.3px;background:#1347d9"></div><span class="r p" style="right:67.0px">-63.6%</span><svg class="ar" style="left:2283.4px;top:15.5px" width="10" height="16" viewBox="0 0 10 16"><path fill="#ee3e34" d="M2.8 0h4.400v9h1.900L5 14.800L.900 9h1.900z"/><path fill="#fff" fill-opacity=".5" d="M2.800 .900h4.400v1h-4.400zM2.800 5.700h4.400v1h-4.400z"/><path fill="#fff" fill-opacity=".25" d="M2.800 3.300h4.400v.900h-4.400z"/></svg></div>
<div class="row two" style="top:629.2px;height:70.4px"><div class="bg"></div><span class="n">14.</span><span class="u" style="letter-spacing:0.115px">https://inhouse-plus.jp/marketing/difference-between-ad-conversion-and-<br>google-analytics-conversion-tracking/</span><span class="r" style="right:1376.0px">328</span><div class="bar" style="left:971.4px;width:2.5px;background:#1347d9"></div><span class="r p" style="right:1156.6px">-56.2%</span><svg class="ar" style="left:1193.8px;top:15.5px" width="10" height="16" viewBox="0 0 10 16"><path fill="#ee3e34" d="M2.8 0h4.400v9h1.900L5 14.800L.900 9h1.900z"/><path fill="#fff" fill-opacity=".5" d="M2.800 .900h4.400v1h-4.400zM2.800 5.700h4.400v1h-4.400z"/><path fill="#fff" fill-opacity=".25" d="M2.800 3.300h4.400v.900h-4.400z"/></svg><span class="r" style="right:1041.0px">50.06</span><div class="bar" style="left:1307.7px;width:67.9px;background:#b8c5ee"></div><span class="r p" style="right:768.7px">-9.3%</span><svg class="ar" style="left:1581.7px;top:15.5px" width="10" height="16" viewBox="0 0 10 16"><path fill="#ee3e34" d="M2.8 0h4.400v9h1.900L5 14.800L.900 9h1.900z"/><path fill="#fff" fill-opacity=".5" d="M2.800 .900h4.400v1h-4.400zM2.800 5.700h4.400v1h-4.400z"/><path fill="#fff" fill-opacity=".25" d="M2.800 3.300h4.400v.900h-4.400z"/></svg><span class="r c" style="right:638.0px">0.91%</span><div class="bar" style="left:1709.1px;width:1.5px;background:#b8c5ee"></div><span class="r p" style="right:442.9px">585.1%</span><svg class="ar" style="left:1907.5px;top:15.5px" width="10" height="16" viewBox="0 0 10 16"><path fill="#2e8f39" d="M5 .600L8.800 5.500H7.500v9.800h-5V5.500H1.200z"/><path fill="#fff" fill-opacity=".38" d="M2.500 7.800h5v1.100h-5zM2.500 11h5v1.100h-5z"/></svg><span class="r" style="right:342.1px">3</span><div class="bar" style="left:2006.2px;width:1.8px;background:#1347d9"></div><span class="r p" style="right:67.0px">200.0%</span><svg class="ar" style="left:2283.4px;top:15.5px" width="10" height="16" viewBox="0 0 10 16"><path fill="#2e8f39" d="M5 .600L8.800 5.500H7.500v9.800h-5V5.500H1.200z"/><path fill="#fff" fill-opacity=".38" d="M2.500 7.800h5v1.100h-5zM2.500 11h5v1.100h-5z"/></svg></div>
<div class="row" style="top:699.6px;height:48.4px"><span class="n">15.</span><span class="u" style="letter-spacing:0.35px">https://inhouse-plus.jp/reporting/calculated-field/</span><span class="r" style="right:1376.0px">121</span><div class="bar" style="left:971.4px;width:1.4px;background:#1347d9"></div><span class="r p" style="right:1156.6px">-41.8%</span><svg class="ar" style="left:1193.8px;top:15.5px" width="10" height="16" viewBox="0 0 10 16"><path fill="#ee3e34" d="M2.8 0h4.400v9h1.900L5 14.800L.900 9h1.900z"/><path fill="#fff" fill-opacity=".5" d="M2.800 .900h4.400v1h-4.400zM2.800 5.700h4.400v1h-4.400z"/><path fill="#fff" fill-opacity=".25" d="M2.800 3.300h4.400v.900h-4.400z"/></svg><span class="r" style="right:1041.0px">8.19</span><div class="bar" style="left:1307.7px;width:11.1px;background:#b8c5ee"></div><span class="r p" style="right:768.7px">-45.6%</span><svg class="ar" style="left:1581.7px;top:15.5px" width="10" height="16" viewBox="0 0 10 16"><path fill="#ee3e34" d="M2.8 0h4.400v9h1.900L5 14.800L.900 9h1.900z"/><path fill="#fff" fill-opacity=".5" d="M2.800 .900h4.400v1h-4.400zM2.800 5.700h4.400v1h-4.400z"/><path fill="#fff" fill-opacity=".25" d="M2.800 3.300h4.400v.900h-4.400z"/></svg><span class="r c" style="right:638.0px">2.48%</span><div class="bar" style="left:1709.1px;width:1.5px;background:#b8c5ee"></div><span class="r p" style="right:442.9px">157.9%</span><svg class="ar" style="left:1907.5px;top:15.5px" width="10" height="16" viewBox="0 0 10 16"><path fill="#2e8f39" d="M5 .600L8.800 5.500H7.500v9.800h-5V5.500H1.200z"/><path fill="#fff" fill-opacity=".38" d="M2.500 7.800h5v1.100h-5zM2.500 11h5v1.100h-5z"/></svg><span class="r" style="right:342.1px">3</span><div class="bar" style="left:2006.2px;width:1.8px;background:#1347d9"></div><span class="r p" style="right:67.0px">50.0%</span><svg class="ar" style="left:2283.4px;top:15.5px" width="10" height="16" viewBox="0 0 10 16"><path fill="#2e8f39" d="M5 .600L8.800 5.500H7.500v9.800h-5V5.500H1.200z"/><path fill="#fff" fill-opacity=".38" d="M2.500 7.800h5v1.100h-5zM2.500 11h5v1.100h-5z"/></svg></div>
<div class="row" style="top:748.0px;height:48.4px"><div class="bg"></div><span class="n">16.</span><span class="u" style="letter-spacing:0.36px">https://inhouse-plus.jp/reporting/instagram-insight-report/</span><span class="r" style="right:1376.0px">421</span><div class="bar" style="left:971.4px;width:3.2px;background:#1347d9"></div><span class="r p" style="right:1156.6px">-61.4%</span><svg class="ar" style="left:1193.8px;top:15.5px" width="10" height="16" viewBox="0 0 10 16"><path fill="#ee3e34" d="M2.8 0h4.400v9h1.900L5 14.800L.900 9h1.900z"/><path fill="#fff" fill-opacity=".5" d="M2.800 .900h4.400v1h-4.400zM2.800 5.700h4.400v1h-4.400z"/><path fill="#fff" fill-opacity=".25" d="M2.800 3.300h4.400v.900h-4.400z"/></svg><span class="r" style="right:1041.0px">40.4</span><div class="bar" style="left:1307.7px;width:54.8px;background:#b8c5ee"></div><span class="r p" style="right:768.7px">-8.6%</span><svg class="ar" style="left:1581.7px;top:15.5px" width="10" height="16" viewBox="0 0 10 16"><path fill="#ee3e34" d="M2.8 0h4.400v9h1.900L5 14.800L.900 9h1.900z"/><path fill="#fff" fill-opacity=".5" d="M2.800 .900h4.400v1h-4.400zM2.800 5.700h4.400v1h-4.400z"/><path fill="#fff" fill-opacity=".25" d="M2.800 3.300h4.400v.900h-4.400z"/></svg><span class="r c" style="right:638.0px">0.71%</span><div class="bar" style="left:1709.1px;width:1.5px;background:#b8c5ee"></div><span class="r p" style="right:442.9px">158.9%</span><svg class="ar" style="left:1907.5px;top:15.5px" width="10" height="16" viewBox="0 0 10 16"><path fill="#2e8f39" d="M5 .600L8.800 5.500H7.500v9.800h-5V5.500H1.200z"/><path fill="#fff" fill-opacity=".38" d="M2.500 7.800h5v1.100h-5zM2.500 11h5v1.100h-5z"/></svg><span class="r" style="right:342.1px">3</span><div class="bar" style="left:2006.2px;width:1.8px;background:#1347d9"></div><span class="r p" style="right:67.0px">0.0%</span></div>
<div class="row" style="top:796.4px;height:48.4px"><span class="n">17.</span><span class="u" style="letter-spacing:0.29px">https://inhouse-plus.jp/reporting/looker-studio-period-graph/</span><span class="r" style="right:1376.0px">103</span><div class="bar" style="left:971.4px;width:1.4px;background:#1347d9"></div><span class="r p" style="right:1156.6px">28.7%</span><svg class="ar" style="left:1193.8px;top:15.5px" width="10" height="16" viewBox="0 0 10 16"><path fill="#2e8f39" d="M5 .600L8.800 5.500H7.500v9.800h-5V5.500H1.200z"/><path fill="#fff" fill-opacity=".38" d="M2.500 7.800h5v1.100h-5zM2.500 11h5v1.100h-5z"/></svg><span class="r" style="right:1041.0px">6.34</span><div class="bar" style="left:1307.7px;width:8.6px;background:#b8c5ee"></div><span class="r p" style="right:768.7px">-67.6%</span><svg class="ar" style="left:1581.7px;top:15.5px" width="10" height="16" viewBox="0 0 10 16"><path fill="#ee3e34" d="M2.8 0h4.400v9h1.900L5 14.800L.900 9h1.900z"/><path fill="#fff" fill-opacity=".5" d="M2.800 .900h4.400v1h-4.400zM2.800 5.700h4.400v1h-4.400z"/><path fill="#fff" fill-opacity=".25" d="M2.800 3.300h4.400v.900h-4.400z"/></svg><span class="r c" style="right:638.0px">2.91%</span><div class="bar" style="left:1709.1px;width:1.7px;background:#b8c5ee"></div><span class="r p" style="right:442.9px">-41.7%</span><svg class="ar" style="left:1907.5px;top:15.5px" width="10" height="16" viewBox="0 0 10 16"><path fill="#ee3e34" d="M2.8 0h4.400v9h1.900L5 14.800L.900 9h1.900z"/><path fill="#fff" fill-opacity=".5" d="M2.800 .900h4.400v1h-4.400zM2.800 5.700h4.400v1h-4.400z"/><path fill="#fff" fill-opacity=".25" d="M2.800 3.300h4.400v.900h-4.400z"/></svg><span class="r" style="right:342.1px">3</span><div class="bar" style="left:2006.2px;width:1.8px;background:#1347d9"></div><span class="r p" style="right:67.0px">-25.0%</span><svg class="ar" style="left:2283.4px;top:15.5px" width="10" height="16" viewBox="0 0 10 16"><path fill="#ee3e34" d="M2.8 0h4.400v9h1.900L5 14.800L.900 9h1.900z"/><path fill="#fff" fill-opacity=".5" d="M2.800 .900h4.400v1h-4.400zM2.800 5.700h4.400v1h-4.400z"/><path fill="#fff" fill-opacity=".25" d="M2.800 3.300h4.400v.900h-4.400z"/></svg></div>
<div class="row" style="top:844.8px;height:48.4px"><div class="bg"></div><span class="n">18.</span><span class="u" style="letter-spacing:0.41px">https://inhouse-plus.jp/marketing/data-retention/</span><span class="r" style="right:1376.0px">94</span><div class="bar" style="left:971.4px;width:1.4px;background:#1347d9"></div><span class="r p" style="right:1156.6px">-42.0%</span><svg class="ar" style="left:1193.8px;top:15.5px" width="10" height="16" viewBox="0 0 10 16"><path fill="#ee3e34" d="M2.8 0h4.400v9h1.900L5 14.800L.900 9h1.900z"/><path fill="#fff" fill-opacity=".5" d="M2.800 .900h4.400v1h-4.400zM2.800 5.700h4.400v1h-4.400z"/><path fill="#fff" fill-opacity=".25" d="M2.800 3.300h4.400v.900h-4.400z"/></svg><span class="r" style="right:1041.0px">20.33</span><div class="bar" style="left:1307.7px;width:27.6px;background:#b8c5ee"></div><span class="r p" style="right:768.7px">95.0%</span><svg class="ar" style="left:1581.7px;top:15.5px" width="10" height="16" viewBox="0 0 10 16"><path fill="#2e8f39" d="M5 .600L8.800 5.500H7.500v9.800h-5V5.500H1.200z"/><path fill="#fff" fill-opacity=".38" d="M2.500 7.800h5v1.100h-5zM2.500 11h5v1.100h-5z"/></svg><span class="r c" style="right:638.0px">2.13%</span><div class="bar" style="left:1709.1px;width:1.5px;background:#b8c5ee"></div><span class="r p" style="right:442.9px">72.3%</span><svg class="ar" style="left:1907.5px;top:15.5px" width="10" height="16" viewBox="0 0 10 16"><path fill="#2e8f39" d="M5 .600L8.800 5.500H7.500v9.800h-5V5.500H1.200z"/><path fill="#fff" fill-opacity=".38" d="M2.500 7.800h5v1.100h-5zM2.500 11h5v1.100h-5z"/></svg><span class="r" style="right:342.1px">2</span><div class="bar" style="left:2006.2px;width:1.6px;background:#1347d9"></div><span class="r p" style="right:67.0px">0.0%</span></div>
<div class="row" style="top:893.2px;height:48.4px"><span class="n">19.</span><span class="u" style="letter-spacing:0.41px">https://inhouse-plus.jp/reporting/combination-chart/</span><span class="r" style="right:1376.0px">356</span><div class="bar" style="left:971.4px;width:2.7px;background:#1347d9"></div><span class="r p" style="right:1156.6px">-38.8%</span><svg class="ar" style="left:1193.8px;top:15.5px" width="10" height="16" viewBox="0 0 10 16"><path fill="#ee3e34" d="M2.8 0h4.400v9h1.900L5 14.800L.900 9h1.900z"/><path fill="#fff" fill-opacity=".5" d="M2.800 .900h4.400v1h-4.400zM2.800 5.700h4.400v1h-4.400z"/><path fill="#fff" fill-opacity=".25" d="M2.800 3.300h4.400v.900h-4.400z"/></svg><span class="r" style="right:1041.0px">26.18</span><div class="bar" style="left:1307.7px;width:35.5px;background:#b8c5ee"></div><span class="r p" style="right:768.7px">-22.7%</span><svg class="ar" style="left:1581.7px;top:15.5px" width="10" height="16" viewBox="0 0 10 16"><path fill="#ee3e34" d="M2.8 0h4.400v9h1.900L5 14.800L.900 9h1.900z"/><path fill="#fff" fill-opacity=".5" d="M2.800 .900h4.400v1h-4.400zM2.800 5.700h4.400v1h-4.400z"/><path fill="#fff" fill-opacity=".25" d="M2.800 3.300h4.400v.900h-4.400z"/></svg><span class="r c" style="right:638.0px">0.56%</span><div class="bar" style="left:1709.1px;width:1.5px;background:#b8c5ee"></div><span class="r" style="right:420.6px">-</span><span class="r" style="right:342.1px">2</span><div class="bar" style="left:2006.2px;width:1.6px;background:#1347d9"></div><span class="r" style="right:44.7px">-</span></div>
<div class="row" style="top:941.6px;height:48.4px"><div class="bg"></div><span class="n">20.</span><span class="u" style="letter-spacing:0.29px">https://inhouse-plus.jp/reporting/looker-studio-case/</span><span class="r" style="right:1376.0px">120</span><div class="bar" style="left:971.4px;width:1.4px;background:#1347d9"></div><span class="r p" style="right:1156.6px">-2.4%</span><svg class="ar" style="left:1193.8px;top:15.5px" width="10" height="16" viewBox="0 0 10 16"><path fill="#ee3e34" d="M2.8 0h4.400v9h1.900L5 14.800L.900 9h1.900z"/><path fill="#fff" fill-opacity=".5" d="M2.800 .900h4.400v1h-4.400zM2.800 5.700h4.400v1h-4.400z"/><path fill="#fff" fill-opacity=".25" d="M2.800 3.300h4.400v.900h-4.400z"/></svg><span class="r" style="right:1041.0px">7.32</span><div class="bar" style="left:1307.7px;width:9.9px;background:#b8c5ee"></div><span class="r p" style="right:768.7px">-36.2%</span><svg class="ar" style="left:1581.7px;top:15.5px" width="10" height="16" viewBox="0 0 10 16"><path fill="#ee3e34" d="M2.8 0h4.400v9h1.900L5 14.800L.900 9h1.900z"/><path fill="#fff" fill-opacity=".5" d="M2.800 .900h4.400v1h-4.400zM2.800 5.700h4.400v1h-4.400z"/><path fill="#fff" fill-opacity=".25" d="M2.800 3.300h4.400v.900h-4.400z"/></svg><span class="r c" style="right:638.0px">1.67%</span><div class="bar" style="left:1709.1px;width:1.5px;background:#b8c5ee"></div><span class="r p" style="right:442.9px">105.0%</span><svg class="ar" style="left:1907.5px;top:15.5px" width="10" height="16" viewBox="0 0 10 16"><path fill="#2e8f39" d="M5 .600L8.800 5.500H7.500v9.800h-5V5.500H1.200z"/><path fill="#fff" fill-opacity=".38" d="M2.500 7.800h5v1.100h-5zM2.500 11h5v1.100h-5z"/></svg><span class="r" style="right:342.1px">2</span><div class="bar" style="left:2006.2px;width:1.6px;background:#1347d9"></div><span class="r p" style="right:67.0px">100.0%</span><svg class="ar" style="left:2283.4px;top:15.5px" width="10" height="16" viewBox="0 0 10 16"><path fill="#2e8f39" d="M5 .600L8.800 5.500H7.500v9.800h-5V5.500H1.200z"/><path fill="#fff" fill-opacity=".38" d="M2.500 7.800h5v1.100h-5zM2.500 11h5v1.100h-5z"/></svg></div>
<div class="row" style="top:990.0px;height:48.4px"><span class="n">21.</span><span class="u" style="letter-spacing:0.29px">https://inhouse-plus.jp/reporting/looker-studio-image/</span><span class="r" style="right:1376.0px">257</span><div class="bar" style="left:971.4px;width:1.9px;background:#1347d9"></div><span class="r p" style="right:1156.6px">42.0%</span><svg class="ar" style="left:1193.8px;top:15.5px" width="10" height="16" viewBox="0 0 10 16"><path fill="#2e8f39" d="M5 .600L8.800 5.500H7.500v9.800h-5V5.500H1.200z"/><path fill="#fff" fill-opacity=".38" d="M2.500 7.800h5v1.100h-5zM2.500 11h5v1.100h-5z"/></svg><span class="r" style="right:1041.0px">11.13</span><div class="bar" style="left:1307.7px;width:15.1px;background:#b8c5ee"></div><span class="r p" style="right:768.7px">-11.0%</span><svg class="ar" style="left:1581.7px;top:15.5px" width="10" height="16" viewBox="0 0 10 16"><path fill="#ee3e34" d="M2.8 0h4.400v9h1.900L5 14.800L.900 9h1.900z"/><path fill="#fff" fill-opacity=".5" d="M2.800 .900h4.400v1h-4.400zM2.800 5.700h4.400v1h-4.400z"/><path fill="#fff" fill-opacity=".25" d="M2.800 3.300h4.400v.900h-4.400z"/></svg><span class="r c" style="right:638.0px">0.78%</span><div class="bar" style="left:1709.1px;width:1.5px;background:#b8c5ee"></div><span class="r" style="right:420.6px">-</span><span class="r" style="right:342.1px">2</span><div class="bar" style="left:2006.2px;width:1.6px;background:#1347d9"></div><span class="r" style="right:44.7px">-</span></div>
<div class="row" style="top:1038.4px;height:48.4px"><div class="bg"></div><span class="n">22.</span><span class="u" style="letter-spacing:0.33px">https://inhouse-plus.jp/reporting/looker-studio-pro/</span><span class="r" style="right:1376.0px">42</span><div class="bar" style="left:971.4px;width:1.4px;background:#1347d9"></div><span class="r p" style="right:1156.6px">133.3%</span><svg class="ar" style="left:1193.8px;top:15.5px" width="10" height="16" viewBox="0 0 10 16"><path fill="#2e8f39" d="M5 .600L8.800 5.500H7.500v9.800h-5V5.500H1.200z"/><path fill="#fff" fill-opacity=".38" d="M2.500 7.800h5v1.100h-5zM2.500 11h5v1.100h-5z"/></svg><span class="r" style="right:1041.0px">29.95</span><div class="bar" style="left:1307.7px;width:40.6px;background:#b8c5ee"></div><span class="r p" style="right:768.7px">80.3%</span><svg class="ar" style="left:1581.7px;top:15.5px" width="10" height="16" viewBox="0 0 10 16"><path fill="#2e8f39" d="M5 .600L8.800 5.500H7.500v9.800h-5V5.500H1.200z"/><path fill="#fff" fill-opacity=".38" d="M2.500 7.800h5v1.100h-5zM2.500 11h5v1.100h-5z"/></svg><span class="r c" style="right:638.0px">4.76%</span><div class="bar" style="left:1709.1px;width:2.9px;background:#b8c5ee"></div><span class="r" style="right:420.6px">-</span><span class="r" style="right:342.1px">2</span><div class="bar" style="left:2006.2px;width:1.6px;background:#1347d9"></div><span class="r" style="right:44.7px">-</span></div>
</div>
<div class="row tot" style="top:1352.8999999999999px;background:#fff"><span style="left:113px;font-size:20.6px;top:.6px">総計</span><span style="left:886px;letter-spacing:-0.45px">62,079</span><span class="r p" style="right:1156.6px">-31.7%</span><svg class="ar" style="left:1193.8px;top:15.5px" width="10" height="16" viewBox="0 0 10 16"><path fill="#ee3e34" d="M2.8 0h4.400v9h1.900L5 14.800L.900 9h1.900z"/><path fill="#fff" fill-opacity=".5" d="M2.800 .900h4.400v1h-4.400zM2.800 5.700h4.400v1h-4.400z"/><path fill="#fff" fill-opacity=".25" d="M2.800 3.300h4.400v.900h-4.400z"/></svg><span style="left:1235.5px;letter-spacing:-0.1px">18.08</span><span class="r p" style="right:768.7px">-31.7%</span><svg class="ar" style="left:1581.7px;top:15.5px" width="10" height="16" viewBox="0 0 10 16"><path fill="#ee3e34" d="M2.8 0h4.400v9h1.900L5 14.800L.900 9h1.900z"/><path fill="#fff" fill-opacity=".5" d="M2.800 .900h4.400v1h-4.400zM2.800 5.700h4.400v1h-4.400z"/><path fill="#fff" fill-opacity=".25" d="M2.800 3.300h4.400v.900h-4.400z"/></svg><span style="left:1623.5px;letter-spacing:0px">1<span style="display:inline-block;transform:scaleX(.76);transform-origin:0 50%">%</span></span><span class="r p" style="right:442.9px">26.3%</span><svg class="ar" style="left:1907.5px;top:15.5px" width="10" height="16" viewBox="0 0 10 16"><path fill="#2e8f39" d="M5 .600L8.800 5.500H7.500v9.800h-5V5.500H1.200z"/><path fill="#fff" fill-opacity=".38" d="M2.500 7.800h5v1.100h-5zM2.500 11h5v1.100h-5z"/></svg><span style="left:1949px;letter-spacing:0.5px">622</span><span class="r p" style="right:67.0px">-13.7%</span><svg class="ar" style="left:2283.4px;top:15.5px" width="10" height="16" viewBox="0 0 10 16"><path fill="#ee3e34" d="M2.8 0h4.400v9h1.900L5 14.800L.900 9h1.900z"/><path fill="#fff" fill-opacity=".5" d="M2.800 .900h4.400v1h-4.400zM2.800 5.700h4.400v1h-4.400z"/><path fill="#fff" fill-opacity=".25" d="M2.800 3.300h4.400v.900h-4.400z"/></svg></div>
<div class="abs" style="left:2059.5px;top:1404.3px;font-size:22px;line-height:30px;color:#3c3c3c;letter-spacing:0px;word-spacing:-.6px">1 - 179 / 179</div>
<svg class="abs" style="left:2215px;top:1400px" width="90" height="38" viewBox="2215 1400 90 38"><path fill="#b3b3b3" d="M2232 1407.2V1412L2225.6 1418.800L2232 1425.600V1430.400L2220.700 1418.800z"/><path fill="#b3b3b3" d="M2280.500 1407.200V1412L2286.900 1418.800L2280.500 1425.600V1430.400L2291.800 1418.800z"/></svg>
<div class="abs" style="left:31px;top:1452.500px;width:2281px;height:139px;box-sizing:border-box;border:2px solid #d8d8d8"></div>
<div class="abs" style="left:46px;top:1466.5px;font-size:24px;line-height:36px;color:#222;letter-spacing:1.35px">コメント記入欄</div>
<div class="abs" style="left:44px;top:1609.8px;font-size:18px;line-height:28px;color:#222">* 注記</div>
<div class="abs" style="left:2211.5px;top:1613.5px;font-size:17.6px;line-height:24px;font-weight:bold;transform:scaleX(.935);transform-origin:0 50%;color:transparent;-webkit-text-stroke:1px #111">YOURLOGO</div>
<div class="abs" style="left:2232px;top:1634px;width:57px;height:1.2px;background:#666"></div>
</div></body></html>
